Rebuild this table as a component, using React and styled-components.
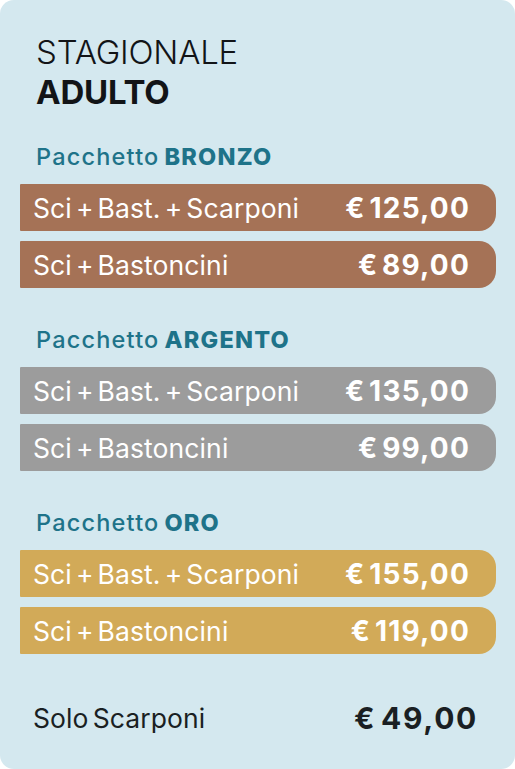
import React from "react";
import styled, { createGlobalStyle } from "styled-components";

const Global = createGlobalStyle`
  html, body { margin: 0; padding: 0; background: #ffffff; }
  body { font-family: Inter, "Liberation Sans", sans-serif; }
`;

const Card = styled.div`
  box-sizing: border-box;
  width: 515px;
  height: 769px;
  background: #d4e8ef;
  border-radius: 14px;
  padding: 32px 19px 0 20px;
  display: flex;
  flex-direction: column;
`;

const Title = styled.h1`
  margin: 0 0 0 16px;
  font-size: 33px;
  line-height: 40px;
  font-weight: ${(p) => (p.$bold ? 700 : 300)};
  color: #121417;
  letter-spacing: -0.2px;
`;

const Section = styled.section`
  display: flex;
  flex-direction: column;
  margin-top: ${(p) => p.$top}px;
`;

const Heading = styled.h2`
  margin: 0 0 13px 16px;
  font-size: 23.5px;
  line-height: 28px;
  font-weight: 500;
  color: #1e7389;
  letter-spacing: 1.2px;
  span { font-weight: 800; margin-left: 5px; }
`;

const Bars = styled.div`
  display: flex;
  flex-direction: column;
  gap: 10px;
`;

const Bar = styled.div`
  height: 47px;
  box-sizing: border-box;
  display: flex;
  align-items: center;
  justify-content: space-between;
  padding: 0 26px 0 13px;
  background: ${(p) => p.$color};
  border-radius: 1px 17px 17px 1px / 1px 17px 17px 1px;
  color: #ffffff;
`;

const Label = styled.span`
  font-size: 26.5px;
  font-weight: 400;
  letter-spacing: 0.1px;
  word-spacing: -3.5px;
`;

const Price = styled.span`
  font-size: ${(p) => (p.$big ? 30 : 28)}px;
  font-weight: 700;
  letter-spacing: ${(p) => (p.$big ? 1.7 : 1.2)}px;
  word-spacing: -4px;
`;

const Solo = styled.div`
  height: 47px;
  margin-top: 40px;
  display: flex;
  align-items: center;
  justify-content: space-between;
  padding: 0 18px 0 13px;
  color: #1a1f23;
`;

const packages = [
  {
    name: "BRONZO",
    color: "#a57256",
    top: 31,
    rows: [
      ["Sci + Bast. + Scarponi", "€ 125,00"],
      ["Sci + Bastoncini", "€ 89,00"],
    ],
  },
  {
    name: "ARGENTO",
    color: "#9c9c9c",
    top: 38,
    rows: [
      ["Sci + Bast. + Scarponi", "€ 135,00"],
      ["Sci + Bastoncini", "€ 99,00"],
    ],
  },
  {
    name: "ORO",
    color: "#d2aa58",
    top: 38,
    rows: [
      ["Sci + Bast. + Scarponi", "€ 155,00"],
      ["Sci + Bastoncini", "€ 119,00"],
    ],
  },
];

export default function App() {
  return (
    <>
      <Global />
      <Card>
        <Title>STAGIONALE</Title>
        <Title $bold>ADULTO</Title>
        {packages.map((pk) => (
          <Section key={pk.name} $top={pk.top}>
            <Heading>
              Pacchetto<span>{pk.name}</span>
            </Heading>
            <Bars>
              {pk.rows.map(([l, p]) => (
                <Bar key={l} $color={pk.color}>
                  <Label>{l}</Label>
                  <Price>{p}</Price>
                </Bar>
              ))}
            </Bars>
          </Section>
        ))}
        <Solo>
          <Label>Solo Scarponi</Label>
          <Price $big>€ 49,00</Price>
        </Solo>
      </Card>
    </>
  );
}
